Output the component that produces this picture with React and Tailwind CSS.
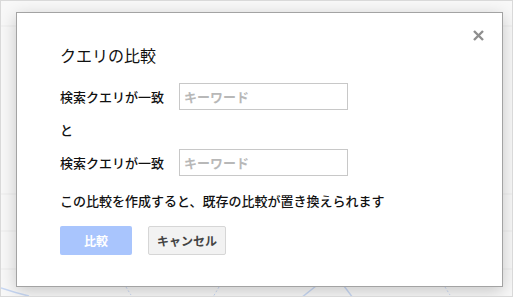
import React from "react";

const jp = { fontFamily: '"Noto Sans CJK JP", "Noto Sans", Arial, sans-serif' };

function Row() {
  return (
    <div className="flex items-center h-[27px]">
      <div className="w-[119px] text-[13px] leading-[17px] font-medium text-[#111]">検索クエリが一致</div>
      <div className="w-[169px] h-[27px] border border-[#c8c8c8] bg-white flex items-center pl-[4px] text-[13px] font-bold text-[#b8b8b8]">
        キーワード
      </div>
    </div>
  );
}

export default function App() {
  return (
    <div style={jp} className="relative w-[513px] h-[297px] overflow-hidden border border-[#d9d9d9] bg-[#f8f8f8]">
      <svg className="absolute left-0 top-0" width="513" height="297">
        <line x1="0" y1="25" x2="513" y2="25" stroke="#ececec" strokeWidth="1" />
        <line x1="0" y1="193" x2="513" y2="193" stroke="#ececec" strokeWidth="1" />
        <line x1="0" y1="230" x2="513" y2="230" stroke="#ececec" strokeWidth="1" />
        <line x1="0" y1="268" x2="513" y2="268" stroke="#ececec" strokeWidth="1" />
        <path d="M0 287 Q 15 292 28 295" stroke="#c8d8f4" strokeWidth="1.5" fill="none" />
        <path d="M300 297 L 315 285" stroke="#c8d8f4" strokeWidth="1.5" fill="none" />
        <path d="M343 285 L 352 297" stroke="#c8d8f4" strokeWidth="1.5" fill="none" />
        <path d="M125 286 L 130 294" stroke="#c8d8f4" strokeWidth="1" strokeDasharray="2 2" fill="none" />
        <path d="M218 286 L 212 296" stroke="#c8d8f4" strokeWidth="1" strokeDasharray="2 2" fill="none" />
        <path d="M444 286 L 449 294" stroke="#c8d8f4" strokeWidth="1" strokeDasharray="2 2" fill="none" />
      </svg>
      <div className="relative pt-[11px] pl-[15px]">
        <div className="relative w-[487px] h-[275px] border border-[#a3a3a3] bg-white shadow-[0_4px_16px_rgba(0,0,0,0.2)] pl-[43px] pt-[32px] flex flex-col">
          <svg className="absolute left-[456px] top-[17px]" width="11" height="11" viewBox="0 0 11 11">
            <path d="M1 1 L10 10 M10 1 L1 10" stroke="#8e8e8e" strokeWidth="2.4" />
          </svg>
          <div className="text-[16px] leading-[20px] font-normal text-[#111]">クエリの比較</div>
          <div className="mt-[18px]"><Row /></div>
          <div className="mt-[11px] text-[13px] leading-[17px] font-medium text-[#111]">と</div>
          <div className="mt-[11px]"><Row /></div>
          <div className="mt-[16px] text-[13px] leading-[17px] font-medium text-[#111]">この比較を作成すると、既存の比較が置き換えられます</div>
          <div className="mt-[17px] flex gap-[16px]">
            <div className="w-[72px] h-[29px] rounded-[2px] bg-[#a9c5fd] text-white text-[12px] font-bold flex items-center justify-center">比較</div>
            <div className="w-[78px] h-[29px] rounded-[2px] bg-[#f2f2f2] border border-[#d6d6d6] text-[#444] text-[12px] font-bold flex items-center justify-center">キャンセル</div>
          </div>
        </div>
      </div>
    </div>
  );
}
